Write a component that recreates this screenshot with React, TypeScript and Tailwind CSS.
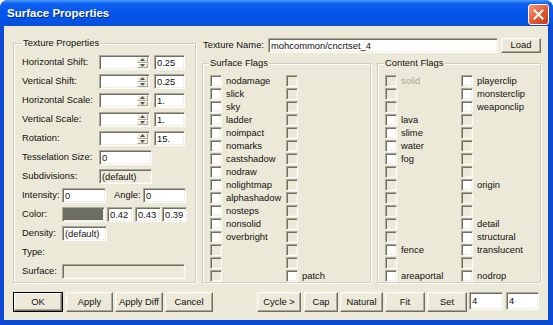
import type { ReactNode } from 'react'

// classic 3D borders on the XP beige
const sunken =
  'border border-t-[#aca899] border-l-[#aca899] border-b-white border-r-white shadow-[inset_1px_1px_0_#716f64,inset_-1px_-1px_0_#f1efe2]'
const raised =
  'border border-t-white border-l-white border-r-[#716f64] border-b-[#716f64] shadow-[inset_-1px_-1px_0_#aca899,inset_1px_1px_0_#f1efe2] bg-[#ece9d8]'
const spinPart = 'border border-t-white border-l-white border-r-[#aca899] border-b-[#aca899] bg-[#ece9d8]'

function Box({ w, value = '', gray, className = '' }: { w: string; value?: string; gray?: boolean; className?: string }) {
  return (
    <div
      className={`flex h-[15px] shrink-0 items-center pl-[2px] leading-none ${sunken} ${gray ? 'bg-[#ece9d8]' : 'bg-white'} ${w} ${className}`}
    >
      {value}
    </div>
  )
}

function Tri({ up }: { up?: boolean }) {
  return (
    <svg width="5" height="3" viewBox="0 0 5 3">
      <path d={up ? 'M0 3 L2.5 0 L5 3 Z' : 'M0 0 L2.5 3 L5 0 Z'} fill="#55554c" />
    </svg>
  )
}

function SpinBox() {
  return (
    <div className={`flex h-[15px] w-[51px] shrink-0 justify-end bg-white p-[1px] ${sunken}`}>
      <div className="flex h-full w-[11px] flex-col">
        <div className={`flex flex-1 items-center justify-center ${spinPart}`}>
          <Tri up />
        </div>
        <div className={`flex flex-1 items-center justify-center ${spinPart}`}>
          <Tri />
        </div>
      </div>
    </div>
  )
}

function Group({ legend, legendLeft, className, children }: { legend: string; legendLeft: string; className: string; children: ReactNode }) {
  return (
    <div className={`relative shrink-0 border border-[#d0cdbc] shadow-[inset_1px_1px_0_#fff,1px_1px_0_#fff] ${className}`}>
      <span className={`absolute top-[-7px] bg-[#ece9d8] px-[1px] leading-[11px] ${legendLeft}`}>{legend}</span>
      {children}
    </div>
  )
}

function Check({ label, on = !!label, dim }: { label?: string; on?: boolean; dim?: boolean }) {
  return (
    <div className="flex h-[13px] items-start">
      <div className={`h-[12px] w-[12px] shrink-0 ${sunken} ${on ? 'bg-white' : 'bg-[#ece9d8]'}`} />
      {label && <span className={`ml-[4px] leading-[12px] ${dim ? 'text-[#aca899]' : ''}`}>{label}</span>}
    </div>
  )
}

function Btn({ w, children, def, className = '' }: { w: string; children: ReactNode; def?: boolean; className?: string }) {
  if (def)
    return (
      <div className={`h-[20px] shrink-0 border border-black ${w} ${className}`}>
        <div className={`flex h-full items-center justify-center ${raised}`}>{children}</div>
      </div>
    )
  return <div className={`flex h-[20px] shrink-0 items-center justify-center ${raised} ${w} ${className}`}>{children}</div>
}

const N = null
const surfaceA = ['nodamage', 'slick', 'sky', 'ladder', 'noimpact', 'nomarks', 'castshadow', 'nodraw', 'nolightmap', 'alphashadow', 'nosteps', 'nonsolid', 'overbright', N, N, N]
const surfaceB = [N, N, N, N, N, N, N, N, N, N, N, N, N, N, N, 'patch']
const contentA = ['solid', N, N, 'lava', 'slime', 'water', 'fog', N, N, N, N, N, N, 'fence', N, 'areaportal']
const contentB = ['playerclip', 'monsterclip', 'weaponclip', N, N, N, N, N, 'origin', N, N, 'detail', 'structural', 'translucent', N, 'nodrop']

function Flags({ a, b }: { a: (string | null)[]; b: (string | null)[] }) {
  return (
    <div className="grid grid-cols-[76px_1fr] pt-[11px] pl-[7px]">
      {a.map((x, i) => [
        <Check key={'a' + i} label={x ?? undefined} on={!!x && x !== 'solid'} dim={x === 'solid'} />,
        <Check key={'b' + i} label={b[i] ?? undefined} />,
      ])}
    </div>
  )
}

const spinRows = [
  ['Horizontal Shift:', '0.25'],
  ['Vertical Shift:', '0.25'],
  ['Horizontal Scale:', '1.'],
  ['Vertical Scale:', '1.'],
  ['Rotation:', '15.'],
]

export default function App() {
  return (
    <div className="h-[325px] w-[553px] overflow-hidden bg-white font-['Liberation_Sans',Arial,sans-serif] text-[9.4px] text-[#111]">
      <div className="flex h-full flex-col rounded-t-[8px] bg-[#0c4ad6]">
        {/* title bar */}
        <div className="flex h-[26px] shrink-0 items-start rounded-t-[8px] bg-[linear-gradient(to_bottom,#4a9bff_0%,#0f62f0_14%,#0356ea_45%,#0254e6_80%,#0a4cd4_100%)] pr-[4px] pl-[7px]">
          <span className="mt-[8px] text-[11.5px] leading-none font-bold text-white [text-shadow:1px_1px_0_#0a2a8a]">
            Surface Properties
          </span>
          <div className="ml-auto mt-[4px] flex h-[21px] w-[21px] items-center justify-center rounded-[3px] border border-white bg-[linear-gradient(135deg,#f29a78,#e2582f_55%,#c63c16)]">
            <svg width="11" height="11" viewBox="0 0 11 11">
              <path d="M1.5 1.5 L9.5 9.5 M9.5 1.5 L1.5 9.5" stroke="#fff" strokeWidth="2" strokeLinecap="square" />
            </svg>
          </div>
        </div>

        {/* client */}
        <div className="mr-[5px] mb-[5px] ml-[4px] flex flex-1 flex-col bg-[#ece9d8]">
          <div className="flex">
            <Group legend="Texture Properties" legendLeft="left-[8px]" className="mt-[17px] ml-[9px] h-[240px] w-[183px]">
              <div className="flex flex-col gap-[4px] pt-[11px] pl-[8px]">
                {spinRows.map(([l, v]) => (
                  <div key={l} className="flex h-[15px] items-center">
                    <span className="w-[77px] shrink-0">{l}</span>
                    <SpinBox />
                    <Box w="w-[31px]" value={v} className="ml-[4px]" />
                  </div>
                ))}
                <div className="flex h-[15px] items-center">
                  <span className="w-[77px] shrink-0">Tesselation Size:</span>
                  <Box w="w-[53px]" value="0" />
                </div>
                <div className="flex h-[15px] items-center">
                  <span className="w-[77px] shrink-0">Subdivisions:</span>
                  <Box w="w-[53px]" value="(default)" gray />
                </div>
                <div className="flex h-[15px] items-center">
                  <span className="w-[40px] shrink-0">Intensity:</span>
                  <Box w="w-[44px]" value="0" />
                  <span className="ml-[8px] w-[29px] shrink-0">Angle:</span>
                  <Box w="w-[43px]" value="0" />
                </div>
                <div className="flex h-[15px] items-center">
                  <span className="w-[40px] shrink-0">Color:</span>
                  <div className={`h-[15px] w-[43px] shrink-0 bg-[#6b6e63] ${sunken}`} />
                  <Box w="w-[26px]" value="0.42" className="ml-[2px]" />
                  <Box w="w-[26px]" value="0.43" className="ml-[2px]" />
                  <Box w="w-[25px]" value="0.39" className="ml-[1px]" />
                </div>
                <div className="flex h-[15px] items-center">
                  <span className="w-[40px] shrink-0">Density:</span>
                  <Box w="w-[45px]" value="(default)" />
                </div>
                <div className="flex h-[15px] items-center">
                  <span className="w-[40px] shrink-0">Type:</span>
                </div>
                <div className="flex h-[15px] items-center">
                  <span className="w-[40px] shrink-0">Surface:</span>
                  <Box w="w-[123px]" gray />
                </div>
              </div>
            </Group>

            <div className="mt-[12px] ml-[6px] flex flex-col">
              <div className="flex h-[15px] items-center">
                <span className="w-[66px] shrink-0 pl-[1px]">Texture Name:</span>
                <Box w="w-[230px]" value="mohcommon/cncrtset_4" />
                <Btn w="w-[40px]" className="ml-[3px] !h-[15px]">
                  Load
                </Btn>
              </div>
              <div className="mt-[10px] flex">
                <Group legend="Surface Flags" legendLeft="left-[6px]" className="h-[220px] w-[169px]">
                  <Flags a={surfaceA} b={surfaceB} />
                </Group>
                <Group legend="Content Flags" legendLeft="left-[6px]" className="ml-[6px] h-[220px] w-[164px]">
                  <Flags a={contentA} b={contentB} />
                </Group>
              </div>
            </div>
          </div>

          <div className="mt-[9px] flex h-[20px] items-start">
            <Btn w="w-[50px]" def className="ml-[9px]">
              OK
            </Btn>
            <Btn w="w-[47px]" className="ml-[3px]">
              Apply
            </Btn>
            <Btn w="w-[48px]" className="ml-[2px]">
              Apply Diff
            </Btn>
            <Btn w="w-[48px]" className="ml-[2px]">
              Cancel
            </Btn>
            <Btn w="w-[44px]" className="ml-[44px]">
              Cycle &gt;
            </Btn>
            <Btn w="w-[34px]" className="ml-[3px]">
              Cap
            </Btn>
            <Btn w="w-[43px]" className="ml-[2px]">
              Natural
            </Btn>
            <Btn w="w-[40px]" className="ml-[2px]">
              Fit
            </Btn>
            <Btn w="w-[40px]" className="ml-[2px]">
              Set
            </Btn>
            <Box w="w-[34px]" value="4" className="ml-[2px] !h-[18px]" />
            <Box w="w-[33px]" value="4" className="ml-[3px] !h-[18px]" />
          </div>
        </div>
      </div>
    </div>
  )
}
